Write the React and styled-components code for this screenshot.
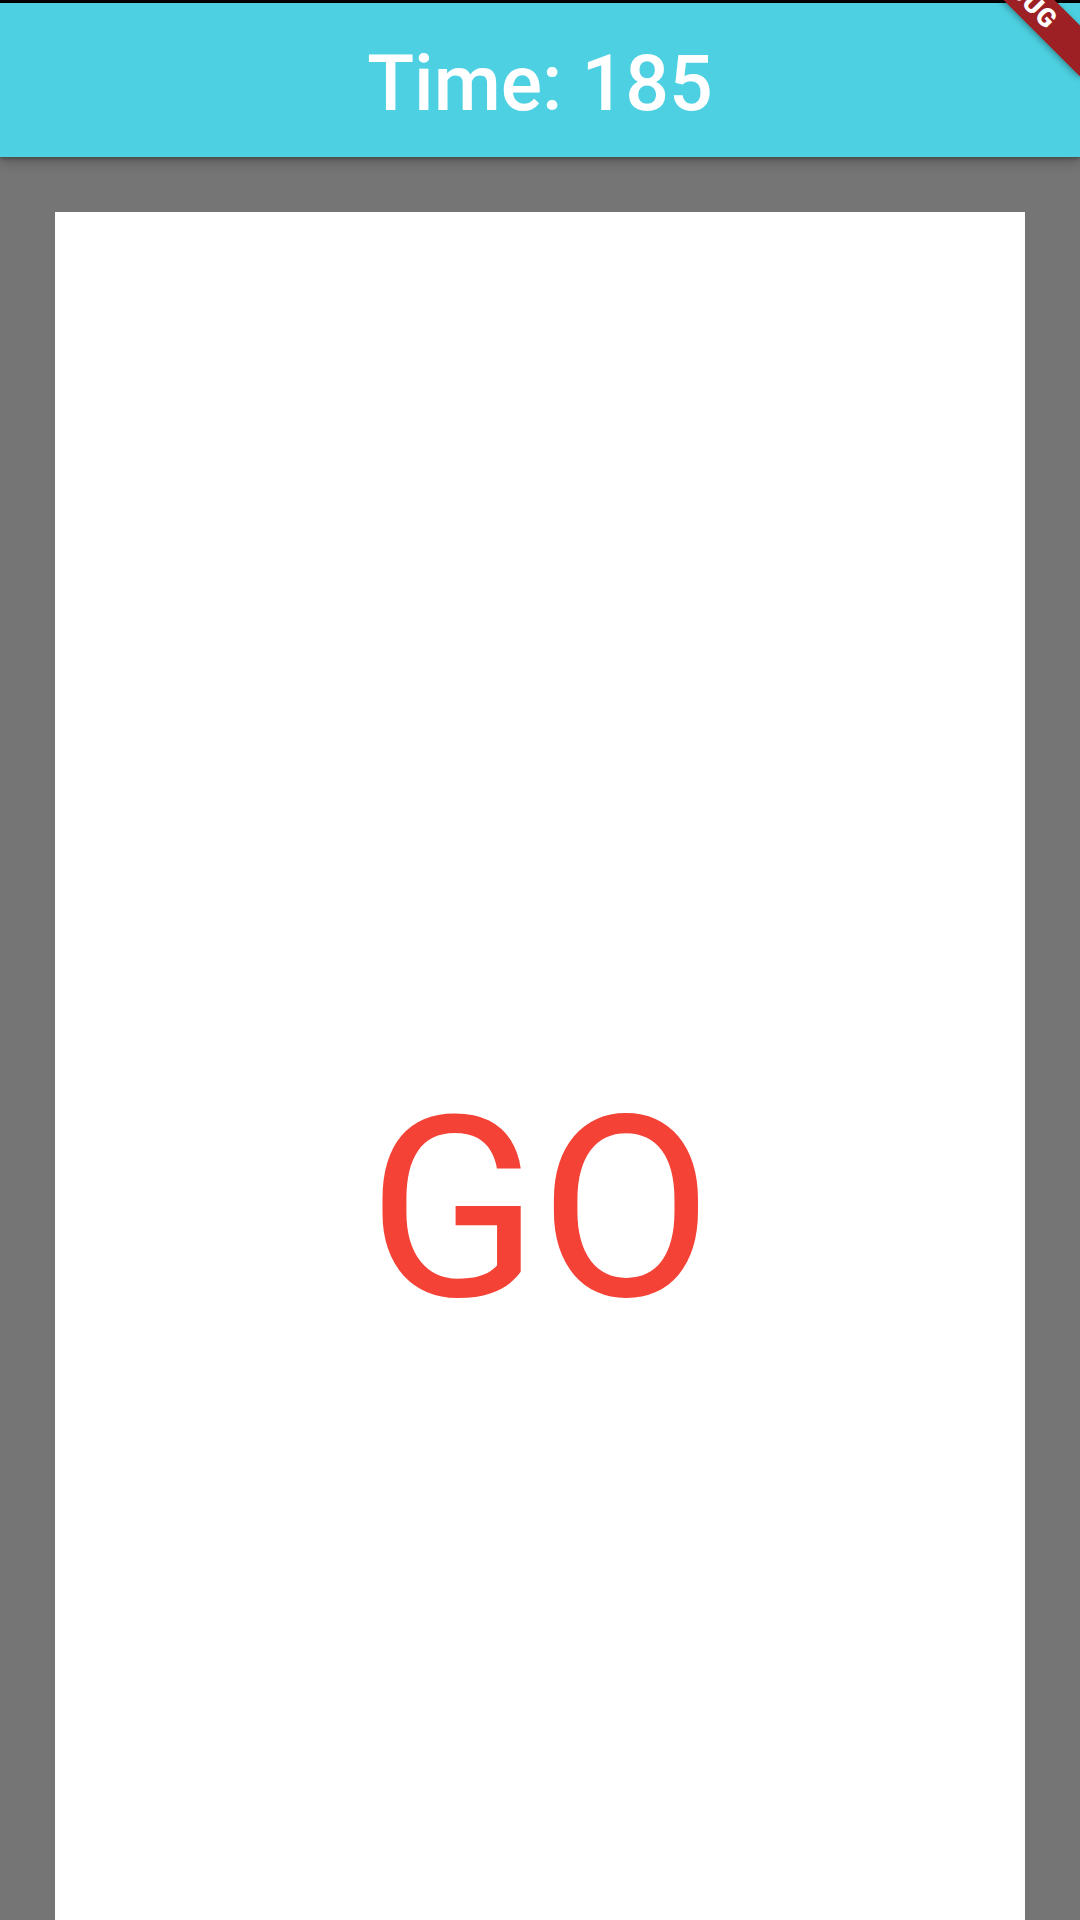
import React from "react";
import styled, { createGlobalStyle } from "styled-components";

const GlobalStyle = createGlobalStyle`
  html, body {
    margin: 0;
    padding: 0;
    height: 1920px;
    overflow: hidden;
    background-color: #757575;
    font-family: Roboto, "Liberation Sans", sans-serif;
  }
`;

const Screen = styled.div`
  position: relative;
  width: 1080px;
  height: 1920px;
  overflow: hidden;
  display: flex;
  flex-direction: column;
  background-color: #757575;
`;

const StatusLine = styled.div`
  height: 3px;
  background-color: #000;
  flex-shrink: 0;
`;

const AppBar = styled.header`
  position: relative;
  z-index: 1;
  height: 154px;
  flex-shrink: 0;
  display: flex;
  align-items: center;
  justify-content: center;
  background-color: #4dd0e1;
  box-shadow: 0 2px 4px rgba(0, 0, 0, 0.25), 0 5px 12px rgba(0, 0, 0, 0.2);
`;

const Title = styled.h1`
  margin: 0;
  margin-top: 8px;
  color: #fff;
  font-size: 77px;
  font-weight: 500;
  letter-spacing: 0;
`;

const Body = styled.main`
  padding: 55px 55px 0;
`;

const Card = styled.div`
  height: 1996px;
  background-color: #fff;
  display: flex;
  align-items: center;
  justify-content: center;
`;

const Signal = styled.span`
  color: ${(p) => p.color};
  font-size: 252px;
  font-weight: 400;
  line-height: 1;
`;

const DebugBanner = styled.div`
  position: absolute;
  z-index: 2;
  left: 922px;
  top: -25px;
  width: 200px;
  height: 36px;
  transform: rotate(45deg);
  background-color: #9c2024;
  box-shadow: 0 2px 6px rgba(0, 0, 0, 0.35);
  color: #fff;
  font-size: 26px;
  font-weight: 900;
  letter-spacing: 1px;
  display: flex;
  align-items: center;
  justify-content: center;
`;

export default function App() {
  const time = 185;
  return (
    <>
      <GlobalStyle />
      <Screen>
        <StatusLine />
        <AppBar>
          <Title>Time: {time}</Title>
        </AppBar>
        <Body>
          <Card>
            <Signal color="#f44336">GO</Signal>
          </Card>
        </Body>
        <DebugBanner>DEBUG</DebugBanner>
      </Screen>
    </>
  );
}
